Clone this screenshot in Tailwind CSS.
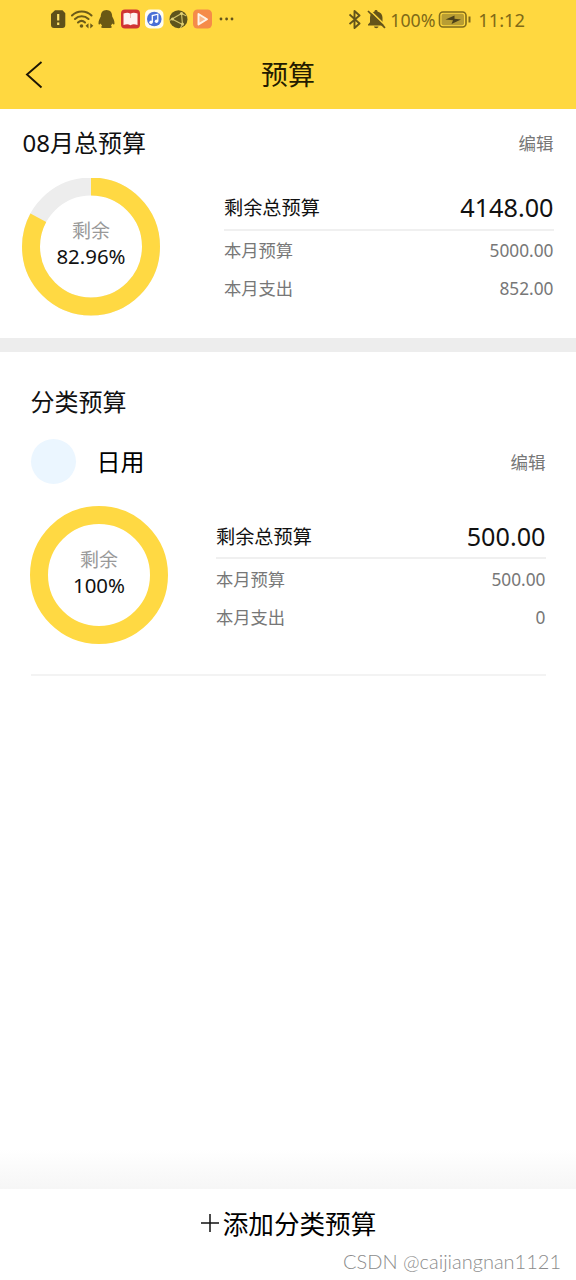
<!DOCTYPE html>
<html lang="zh-CN">
<head>
<meta charset="utf-8">
<meta name="viewport" content="width=device-width, initial-scale=1">
<title>预算</title>
<script src="https://cdn.jsdelivr.net/npm/@tailwindcss/browser@4"></script>
</head>
<body class="bg-white">
<div class="relative flex h-[1280px] w-[576px] flex-col overflow-hidden bg-white font-['Noto_Sans','Noto_Sans_CJK_SC',sans-serif] text-[#111]">
  <header class="h-[109px] shrink-0 bg-[#ffd840]">
    <div class="flex h-10 items-center justify-between pl-[50px] pr-[51px] text-[#64541a]">
      <svg class="h-10 w-[186px]" viewBox="0 0 186 40">
        <path d="M5 10.300h7.500l2.800 3V25a3 3 0 0 1-3 3H4a3 3 0 0 1-3-3V14z" fill="#5f511a"/>
        <path d="M8.200 14v6.500M8.200 22.500v2.500" stroke="#ffe36a" stroke-width="2.200"/>
        <g fill="none" stroke="#6c5b18" stroke-width="2.100" stroke-linecap="round">
          <path d="M22 15.500c5.500-5.300 14-5.300 19.500 0M25 19c3.800-3.700 9.500-3.700 13.500 0M28 22.500c2.200-2 5-2 7 0"/>
        </g>
        <circle cx="31.500" cy="26" r="1.800" fill="#6c5b18"/>
        <path d="M38.500 23.200l-3 2.600 3 2.600zM40.300 23.200l3 2.600-3 2.600z" fill="#6c5b18"/>
        <path d="M56.500 10c-3.800 0-5.800 2.800-5.700 6.500-1.300 2.300-2.500 4.500-2.300 7.300.1 1.200 1.300.8 2.300-.4.300.8.800 1.700 1.300 2.300-1.300.8-1.300 2.300.8 2.300h7.200c2.100 0 2.100-1.500.8-2.300.5-.6 1-1.500 1.300-2.300 1 1.200 2.200 1.600 2.300.4.200-2.800-1-5-2.300-7.300.1-3.700-1.900-6.500-5.700-6.500z" fill="#6a5914"/>
        <rect x="71" y="9.500" width="19" height="19" rx="4" fill="#d03434"/>
        <path d="M73.500 13.500c3-1.200 5-1.200 7 .3 2-1.500 4-1.500 7-.3v11.500c-3-1-5-1-7 .3-2-1.300-4-1.300-7-.3z" fill="#fff3f1"/>
        <path d="M80.500 14v4" stroke="#e9a9a3" stroke-width=".800"/>
        <rect x="95" y="9.500" width="18.500" height="19" rx="5" fill="#fffdf0"/>
        <circle cx="104.300" cy="19" r="7.300" fill="#4a6fd6"/>
        <path d="M102.300 22v-6.500l5.500-1.300V21" fill="none" stroke="#fff" stroke-width="1.300"/>
        <circle cx="101" cy="22.200" r="1.700" fill="#fff"/><circle cx="106.500" cy="21.200" r="1.700" fill="#fff"/>
        <circle cx="128.500" cy="19.200" r="9" fill="#5e541c"/>
        <path d="M131.500 13.500L122 19l10.500 5.500zM122 19l-2.500 1.500M131.500 13.500l5 2.500M132.500 24.500l-2 3.500" fill="none" stroke="#cfc068" stroke-width="1.200"/>
        <circle cx="131.500" cy="13.500" r="1.600" fill="#e0cf70"/><circle cx="122.500" cy="19" r="1.500" fill="#e0cf70"/><circle cx="132.500" cy="24" r="1.500" fill="#e0cf70"/>
        <rect x="143" y="9.500" width="19" height="19" rx="4.500" fill="#f58b49"/>
        <path d="M148.500 14l8.500 5.200-8.500 5.200z" fill="#f9b78c" stroke="#fff3e8" stroke-width="1.900" stroke-linejoin="round"/>
        <g fill="#64541a"><circle cx="171" cy="19" r="1.400"/><circle cx="176.600" cy="19" r="1.400"/><circle cx="182" cy="19" r="1.400"/></g>
      </svg>
      <div class="flex items-center">
        <svg class="h-10 w-[41px]" viewBox="1 0 41 40" fill="none">
          <path d="M1.500 14.500l10 9-5 4.500V11l5 4.500-10 8.500" stroke="#64541a" stroke-width="1.900" stroke-linejoin="round"/>
          <path d="M28 10c1 0 1.500.6 1.500 1.400 3.400.9 5 3.200 5 6.300v4.600l2 2.200v1H20v-1l2-2.200v-4.600c0-3.100 1.600-5.400 4.500-6.300 0-.8.500-1.400 1.500-1.400zM26 26.500h4.500c-.3 2.200-4.200 2.200-4.500 0z" fill="#64541a"/>
          <path d="M21.500 10l17 16.500" stroke="#ffd840" stroke-width="1.600"/>
          <path d="M20 11l17 16.800" stroke="#64541a" stroke-width="1.700"/>
        </svg>
        <span class="w-[48px] text-[17.800px] leading-10 text-[#806a17]">100%</span>
        <svg class="h-10 w-[40px]" viewBox="0 0 40 40" fill="none">
          <rect x="1.500" y="12" width="26.500" height="15" rx="3.500" stroke="#806b1a" stroke-width="1.600"/>
          <rect x="3.500" y="13.800" width="22.500" height="11.400" rx="2" fill="#b89d33"/>
          <path d="M16.500 15.500l-9 4 7.500.8-1.500 3.700 9.500-4.500-6.500-.8z" fill="#4d421a"/>
          <path d="M31.500 16.500v6" stroke="#806b1a" stroke-width="2"/>
        </svg>
        <span class="text-[18.300px] leading-10 text-[#806a17]">11:12</span>
      </div>
    </div>
    <div class="grid h-[69px] grid-cols-[1fr_auto_1fr] items-center">
      <svg class="ml-[24px] h-[30px] w-5" viewBox="0 0 20 30" fill="none"><path d="M17.500 2L3 14.500l14.500 13" stroke="#1d1605" stroke-width="1.900"/></svg>
      <h1 class="text-[27px] leading-none text-[#241b00]">预算</h1>
    </div>
  </header>

  <section class="h-[229px] shrink-0 px-[22.500px] pt-[14px]">
    <div class="flex h-10 items-center justify-between">
      <h2 class="text-[24px] leading-10">08月总预算</h2>
      <span class="text-[17.500px] leading-10 text-[#777]">编辑</span>
    </div>
    <div class="mt-[14.500px] flex">
      <div class="-ml-[.5px] grid h-[138px] w-[138px] shrink-0 place-items-center">
        <svg class="col-start-1 row-start-1 h-[138px] w-[138px] -rotate-90" viewBox="0 0 138 138" fill="none" stroke-width="18">
          <circle cx="69.500" cy="69" r="60" stroke="#ededed"/>
          <circle cx="69.500" cy="69" r="60" stroke="#ffd943" pathLength="100" stroke-dasharray="82.96 100"/>
        </svg>
        <div class="col-start-1 row-start-1 flex flex-col items-center pb-[6px]">
          <span class="text-[19px] leading-[26px] text-[#999]">剩余</span>
          <span class="text-[20.400px] leading-[25px]">82.96%</span>
        </div>
      </div>
      <div class="ml-[64px] flex-1 pt-[10px]">
        <div class="flex h-[43px] items-center justify-between border-b-2 border-[#f0f0f0]">
          <span class="text-[19.200px]">剩余总预算</span><span class="text-[25.200px]">4148.00</span>
        </div>
        <div class="flex h-[40px] items-center justify-between text-[17.300px] text-[#777]"><span>本月预算</span><span>5000.00</span></div>
        <div class="flex h-[37px] items-center justify-between text-[17.300px] text-[#777]"><span>本月支出</span><span>852.00</span></div>
      </div>
    </div>
  </section>

  <div class="h-[14px] shrink-0 bg-[#ededed]"></div>

  <section class="flex-1 px-[30.500px] pt-[30px]">
    <h2 class="text-[24px] leading-10">分类预算</h2>
    <div class="mt-[17px] flex h-[45px] items-center">
      <div class="h-[45px] w-[45px] rounded-full bg-[#ebf6ff]"></div>
      <span class="ml-[21px] pt-px text-[24px] text-black">日用</span>
      <span class="ml-auto pt-px text-[17.500px] text-[#777]">编辑</span>
    </div>
    <div class="mt-[22px] flex h-[170px] border-b-2 border-[#f3f3f3]">
      <div class="-ml-[.5px] grid h-[138px] w-[138px] shrink-0 place-items-center">
        <svg class="col-start-1 row-start-1 h-[138px] w-[138px]" viewBox="0 0 138 138" fill="none" stroke-width="18">
          <circle cx="69" cy="69" r="60" stroke="#ffd943"/>
        </svg>
        <div class="col-start-1 row-start-1 flex flex-col items-center pb-[5px]">
          <span class="text-[19px] leading-[26px] text-[#999]">剩余</span>
          <span class="text-[20.400px] leading-[25px]">100%</span>
        </div>
      </div>
      <div class="ml-[48px] flex-1 pt-[9px]">
        <div class="flex h-[44px] items-center justify-between border-b-2 border-[#f0f0f0] pt-[2px]">
          <span class="text-[19.200px]">剩余总预算</span><span class="text-[25.200px]">500.00</span>
        </div>
        <div class="flex h-[41px] items-center justify-between text-[17.300px] text-[#777]"><span>本月预算</span><span>500.00</span></div>
        <div class="flex h-[36px] items-center justify-between text-[17.300px] text-[#777]"><span>本月支出</span><span>0</span></div>
      </div>
    </div>
  </section>

  <div class="h-[40px] shrink-0 bg-linear-to-b from-white to-[#f6f6f6]"></div>
  <footer class="flex h-[91px] shrink-0 justify-center bg-white pt-[16px] text-[25.600px] leading-10 text-black">
    <svg class="mr-[3px] mt-[8px] h-5 w-5" viewBox="0 0 20 20"><path d="M1 10h18M10 1v18" stroke="#111" stroke-width="1.500"/></svg>
    <span>添加分类预算</span>
  </footer>
  <span class="absolute bottom-[6px] right-[15px] whitespace-nowrap font-['Lato',sans-serif] text-[20px] font-light leading-[26px] text-[#8c8c8c]">CSDN @caijiangnan1121</span>
</div>
</body>
</html>
